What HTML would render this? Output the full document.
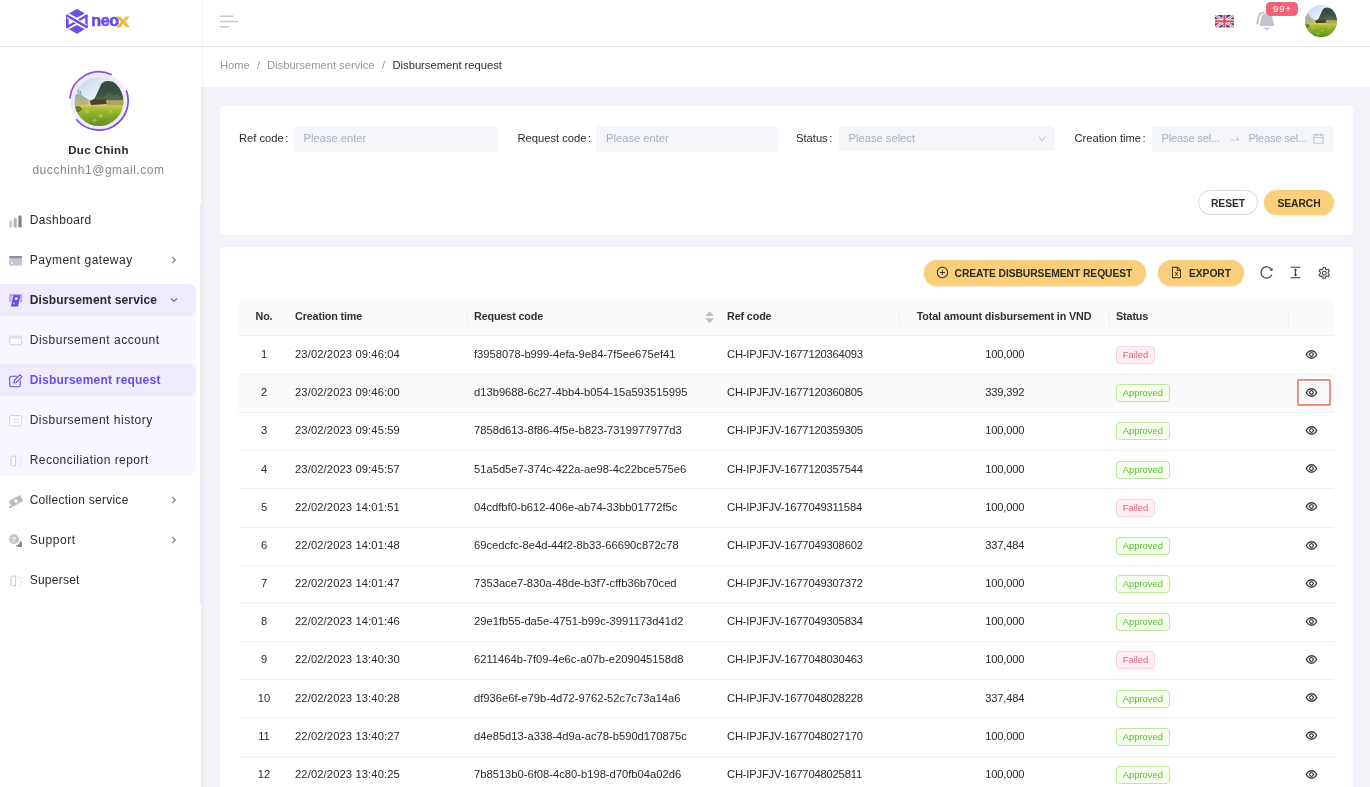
<!DOCTYPE html>
<html lang="en">
<head>
<meta charset="utf-8">
<title>Disbursement request</title>
<style>
*{box-sizing:border-box}
html,body{margin:0;padding:0}
body{width:1370px;height:787px;overflow:hidden;background:#f3f3f9;font-family:"Liberation Sans",Arial,sans-serif;font-size:11.2px;color:#2a2a2e;position:relative}
#wrap{position:absolute;left:0;top:0;width:1370px;height:787px;overflow:hidden;will-change:transform}
.abs{position:absolute}
/* sidebar */
#side{position:absolute;left:0;top:0;width:201px;height:787px;background:#fff}
#side .shadow{position:absolute;left:201px;top:0;width:4px;height:87px;background:linear-gradient(90deg,rgba(0,0,0,.04),rgba(0,0,0,0));z-index:5}
#logo{position:absolute;left:0;top:0;width:201px;height:46px}
#hdrline{position:absolute;left:0;top:46px;width:1370px;height:1px;background:#e7e7ea}
#top{position:absolute;left:201px;top:0;width:1169px;height:46px;background:#fff}
#crumb{position:absolute;left:201px;top:47px;width:1169px;height:40px;background:#fff;font-size:11.2px;color:#97979d;line-height:40px}
#crumb span{position:absolute;top:-2.5px;white-space:nowrap}
.uname{position:absolute;left:0;width:197px;text-align:center;white-space:nowrap}
.menu{position:absolute;left:0;width:196px;height:40px;font-size:12px;color:#2b2b30;white-space:nowrap}
.menu .lbl{position:absolute;left:29.7px;top:0;line-height:40px}
.menu svg.ic{position:absolute;left:8px;top:12.6px}
.menu svg.chev{position:absolute;left:169px;top:15px}
.menu.b .lbl{font-weight:700}
.card{position:absolute;background:#fff;border-radius:4px}
.flabel{position:absolute;top:126px;line-height:25px;font-size:11.2px;color:#2a2a2e;white-space:nowrap}
.finput{position:absolute;top:126px;height:26px;background:#f5f6fa;border-radius:4px;font-size:11.2px;color:#a9afc1;line-height:25px;white-space:nowrap}
.finput span{position:absolute;top:0}
.btn{position:absolute;height:26px;border-radius:13px;font-weight:700;font-size:10.3px;line-height:26px;color:#2f2a22;letter-spacing:-.06px;white-space:nowrap;text-align:center}
.btn.y{background:#f9cf7c;box-shadow:0 1px 2px rgba(200,160,60,.25)}
.btn.w{background:#fff;border:1px solid #d9d9d9;line-height:24px}
/* table */
#tbl{position:absolute;left:239px;top:299px;width:1095px}
.th-row{height:37px;margin-bottom:.72px;background:#fafafa;border-bottom:1px solid #f0f0f0;border-radius:6px 6px 0 0;position:relative;font-weight:700;font-size:10.8px;color:#303034;letter-spacing:-.14px}
.th{position:absolute;top:0;height:36px;line-height:34.4px;white-space:nowrap}
.th .sep{position:absolute;right:-1px;top:9.5px;width:1px;height:17.5px;background:#efefef}
.tr{position:relative;height:38.18px;border-bottom:1px solid #f0f0f0}
.tr.hl{background:#fafafa}
.td{position:absolute;top:.4px;height:37px;line-height:35.2px;white-space:nowrap}
.c-no{left:0;width:50px;text-align:center}
.c-time{left:56px;letter-spacing:.12px}
.c-req{left:235px}
.c-ref{left:488px;letter-spacing:-.18px}
.c-amt{left:660.8px;width:210px;text-align:center;letter-spacing:-.2px}
.c-st{left:877px}
.c-act{left:1049px;width:46px;text-align:center}
.tag{position:absolute;left:0;top:8.9px;display:block;height:18px;line-height:16.6px;padding:0 5.7px;border:1px solid;border-radius:4px;font-size:9.4px;letter-spacing:.02px}
.tag-f{background:#ffeff1;border-color:#f9d3d8;color:#e0647c}
.tag-a{background:#f6ffed;border-color:#bce5a0;color:#5cba38}
.eye{position:absolute;left:17px;top:10.6px;line-height:0}
.eye svg{stroke:#1f1f22;stroke-width:26;fill:#1f1f22}
.eye.boxed{outline:none}
.redbox{position:absolute;left:8px;top:3px;width:36px;height:29px}
</style>
</head>
<body>
<div id="wrap">
<svg width="0" height="0" style="position:absolute">
<defs>
<linearGradient id="p-sky" x1="0" y1="0" x2=".8" y2="1"><stop offset="0" stop-color="#bcd2ec"/><stop offset=".45" stop-color="#e9eff6"/><stop offset="1" stop-color="#f6f4ea"/></linearGradient>
<linearGradient id="p-mt" x1="0" y1="0" x2="0" y2="1"><stop offset="0" stop-color="#33473f"/><stop offset=".6" stop-color="#3f5546"/><stop offset="1" stop-color="#6a7848"/></linearGradient>
<linearGradient id="p-fd" x1="0" y1="0" x2="0" y2="1"><stop offset="0" stop-color="#c3cd4a"/><stop offset=".3" stop-color="#97b52c"/><stop offset="1" stop-color="#5d8e20"/></linearGradient>
<g id="photo">
<rect width="100" height="100" fill="url(#p-sky)"/>
<path d="M0 40L6 33L14 36L22 42L30 47L40 50L0 52z" fill="#9fb0a4"/>
<path d="M6 30l2-6 2 8 3-5 1 9z" fill="#6f7f78" opacity=".7"/>
<path d="M37 50L43 40L49 27L55 14L61 9L68 8L76 9L85 13L92 22L97 32L100 42V58H37z" fill="url(#p-mt)"/>
<path d="M60 40L68 30L78 36L88 34L96 44L100 50V56H56z" fill="#5f6f4c" opacity=".55"/>
<rect x="0" y="48" width="100" height="13" fill="#d6c888"/>
<path d="M0 50L12 47L26 49L30 56L0 58z" fill="#b9b27a"/>
<path d="M31 49L40 45L52 46L64 45L66 55L34 57z" fill="#4d3f2c"/>
<path d="M66 50L80 48L100 50V58H66z" fill="#a9a467"/>
<rect x="0" y="58" width="100" height="42" fill="url(#p-fd)"/>
<path d="M0 60L10 59L16 66L8 72L0 70z" fill="#5c7f2a"/>
<path d="M20 70l6-3 5 4-4 5zM48 78l7-3 4 5-6 4zM70 68l6-2 3 5-6 3zM35 88l8-3 3 5-7 3z" fill="#c6d65a" opacity=".55"/>
</g>
<path id="i-eye" d="M942.2 486.2C847.4 286.5 704.1 186 512 186c-192.2 0-335.4 100.5-430.2 300.3a60.3 60.3 0 000 51.500C176.6 737.5 319.9 838 512 838c192.2 0 335.4-100.5 430.2-300.3 7.7-16.2 7.7-35 0-51.500zM512 766c-161.3 0-279.4-81.8-362.7-254C232.6 339.8 350.7 258 512 258c161.3 0 279.4 81.8 362.7 254C791.5 684.2 673.4 766 512 766zm-4-430c-97.2 0-176 78.8-176 176s78.8 176 176 176 176-78.8 176-176-78.8-176-176-176zm0 288c-61.900 0-112-50.100-112-112s50.100-112 112-112 112 50.100 112 112-50.100 112-112 112z"/>
<path id="i-reload" d="M909.1 209.3l-56.400 44.100C775.8 155.1 656.2 92 521.9 92 290 92 102.3 279.5 102 511.5 101.7 743.7 289.8 932 521.9 932c181.3 0 335.8-115 394.6-276.1 1.500-4.200-.700-8.900-4.900-10.300l-56.700-19.500a8 8 0 00-10.100 4.800c-1.800 5-3.800 10-5.900 14.900-17.300 41-42.100 77.800-73.700 109.400A344.770 344.770 0 01655.9 829c-42.300 17.900-87.400 27-133.800 27-46.500 0-91.500-9.100-133.800-27A341.500 341.500 0 01279 755.2a342.160 342.160 0 01-73.700-109.400c-17.900-42.400-27-87.400-27-133.900s9.100-91.500 27-133.900c17.300-41 42.100-77.800 73.700-109.400 31.600-31.600 68.400-56.400 109.300-73.800 42.300-17.900 87.400-27 133.800-27 46.500 0 91.500 9.100 133.800 27a341.500 341.500 0 01109.300 73.800c9.900 9.900 19.200 20.400 27.800 31.400l-60.200 47a8 8 0 003 14.100l175.600 43c5 1.200 9.900-2.600 9.900-7.700l.800-180.900c-.100-6.600-7.800-10.300-13-6.200z"/>
<path id="i-colh" d="M840 836H184c-4.400 0-8 3.600-8 8v60c0 4.400 3.600 8 8 8h656c4.400 0 8-3.600 8-8v-60c0-4.400-3.600-8-8-8zm0-724H184c-4.400 0-8 3.600-8 8v60c0 4.400 3.600 8 8 8h656c4.400 0 8-3.600 8-8v-60c0-4.400-3.600-8-8-8zM610.800 378c6 0 9.400-7 5.700-11.700L515.700 238.700a7.140 7.140 0 00-11.300 0L403.600 366.300a7.230 7.230 0 005.700 11.700H476v268h-62.800c-6 0-9.400 7-5.700 11.700l100.800 127.500c2.900 3.700 8.500 3.700 11.300 0l100.800-127.500c3.700-4.700.400-11.700-5.700-11.700H548V378h62.800z"/>
<g id="i-plus"><path d="M696 480H544V328c0-4.400-3.600-8-8-8h-48c-4.400 0-8 3.600-8 8v152H328c-4.400 0-8 3.600-8 8v48c0 4.400 3.600 8 8 8h152v152c0 4.400 3.600 8 8 8h48c4.400 0 8-3.600 8-8V544h152c4.400 0 8-3.600 8-8v-48c0-4.400-3.600-8-8-8z"/><path d="M512 64C264.600 64 64 264.600 64 512s200.600 448 448 448 448-200.600 448-448S759.400 64 512 64zm0 820c-205.400 0-372-166.600-372-372s166.600-372 372-372 372 166.600 372 372-166.600 372-372 372z"/></g>
<path id="i-xls" d="M854.600 288.600L639.400 73.400c-6-6-14.100-9.400-22.600-9.400H192c-17.700 0-32 14.300-32 32v832c0 17.700 14.300 32 32 32h640c17.700 0 32-14.300 32-32V311.300c0-8.500-3.400-16.700-9.400-22.700zM790.200 326H602V137.800L790.200 326zm1.800 562H232V136h302v216a42 42 0 0042 42h216v494zM514.100 580.100l-61.800-102.400c-2.200-3.600-6.100-5.800-10.300-5.800h-38.400c-2.300 0-4.500.600-6.400 1.900-5.600 3.500-7.300 10.900-3.700 16.600l82.300 130.400-83.400 132.800a12.040 12.040 0 0010.200 18.400h34.500c4.200 0 8-2.200 10.200-5.700L510 664.800l62.100 101.400c2.200 3.600 6.100 5.700 10.200 5.700H620c2.300 0 4.500-.700 6.500-1.900 5.600-3.600 7.200-11 3.600-16.600l-84-130.400 85.300-132.500a12.040 12.040 0 00-10.100-18.500h-35.700c-4.200 0-8.100 2.200-10.300 5.800l-61.200 102.300z"/>
<path id="i-down" d="M884 256h-75c-5.100 0-9.900 2.500-12.900 6.600L512 654.200 227.900 262.600c-3-4.100-7.800-6.600-12.900-6.600h-75c-6.500 0-10.300 7.400-6.500 12.700l352.600 486.100c12.800 17.600 39 17.600 51.700 0l352.600-486.100c3.900-5.300.100-12.700-6.400-12.700z"/>
<path id="i-swap" d="M873.100 596.200l-164-208A32 32 0 00684 376h-64.800c-6.700 0-10.400 7.700-6.300 13l144.300 183H152c-4.400 0-8 3.600-8 8v60c0 4.400 3.600 8 8 8h695.900c26.800 0 41.700-30.800 25.200-51.800z"/>
<path id="i-cal" d="M880 184H712v-64c0-4.400-3.600-8-8-8h-56c-4.400 0-8 3.600-8 8v64H384v-64c0-4.400-3.600-8-8-8h-56c-4.400 0-8 3.600-8 8v64H144c-17.700 0-32 14.300-32 32v664c0 17.700 14.300 32 32 32h736c17.700 0 32-14.300 32-32V216c0-17.700-14.300-32-32-32zm-40 656H184V460h656v380zM184 392V256h128v48c0 4.400 3.600 8 8 8h56c4.400 0 8-3.600 8-8v-48h256v48c0 4.400 3.600 8 8 8h56c4.400 0 8-3.600 8-8v-48h128v136H184z"/>
<path id="i-cup" d="M858.900 689L530.500 308.200c-9.400-10.900-27.500-10.900-37 0L165.100 689c-12.200 14.200-1.200 35 18.500 35h656.800c19.700 0 30.700-20.800 18.500-35z"/>
<path id="i-cdn" d="M840.400 300H183.600c-19.700 0-30.700 20.800-18.500 35l328.400 380.800c9.400 10.900 27.500 10.900 37 0L858.900 335c12.200-14.200 1.200-35-18.500-35z"/>
</defs>
</svg>
<!-- ============ SIDEBAR ============ -->
<div id="side">
  <div id="logo">
    <svg class="abs" style="left:60px;top:4px" width="35" height="35" viewBox="0 0 787 787">
      <defs><clipPath id="hx"><polygon points="380,104 627,247 627,533 380,676 133,533 133,247"/></clipPath></defs>
      <g clip-path="url(#hx)" fill="#6f4fe6">
        <polygon points="380,108 562,210 380,308 198,210"/>
        <polygon points="380,472 562,570 380,672 198,570"/>
        <rect x="133" y="240" width="62" height="300"/>
        <rect x="567" y="240" width="60" height="300"/>
        <path d="M133 533L627 247" stroke="#6f4fe6" stroke-width="56" fill="none"/>
        <path d="M175 271L585 509" stroke="#fff" stroke-width="100" fill="none"/>
        <path d="M133 247L627 533" stroke="#6f4fe6" stroke-width="56" fill="none"/>
      </g>
    </svg>
    <span class="abs" style="left:91.2px;top:8.2px;font-size:16.2px;font-weight:700;letter-spacing:-.4px;line-height:24px;color:#6a4ce2;-webkit-text-stroke:.55px #6a4ce2">neo</span>
    <span class="abs" style="left:117.4px;top:9.8px;font-size:14.6px;font-weight:700;line-height:24px;color:#ecba42;background:linear-gradient(90deg,#e5a838,#f2d257);-webkit-background-clip:text;background-clip:text;-webkit-text-fill-color:transparent;-webkit-text-stroke:.5px #ecbc45;transform:scaleX(1.27);transform-origin:0 0">X</span>
  </div>
  <div class="shadow"></div>
  <div class="abs" style="left:201px;top:87px;width:5px;height:700px;background:linear-gradient(90deg,#ebebf0,#f3f3f9)"></div>
  <!-- avatar -->
  <svg class="abs" style="left:66px;top:68px" width="66" height="66" viewBox="0 0 66 66">
    <defs><clipPath id="avc"><circle cx="33" cy="33.500" r="24.500"/></clipPath>
    </defs>
    <circle cx="33" cy="33" r="28.600" fill="#f0eafd"/>
    <g clip-path="url(#avc)"><use href="#photo" transform="translate(8.5 9) scale(.49)"/></g>
    <path d="M45.100 6.400A29.300 29.300 0 0 0 3.900 30" fill="none" stroke="#8655d6" stroke-width="1.700" stroke-linecap="round"/>
    <path d="M60.500 23A29.300 29.300 0 0 1 10.600 51.800" fill="none" stroke="#7a4fd6" stroke-width="1.700" stroke-linecap="round"/>
  </svg>
  <div class="uname" style="top:141px;font-size:11.5px;font-weight:700;line-height:18px;color:#2a2a2e;letter-spacing:.34px">Duc Chinh</div>
  <div class="uname" style="top:161px;font-size:12px;line-height:18px;color:#86868e;letter-spacing:.56px">ducchinh1@gmail.com</div>

  <!-- submenu background -->
  <div class="abs" style="left:0;top:284px;width:196px;height:191.5px;background:#f8f6fe;border-radius:0 8px 8px 0"></div>
  <div class="abs" style="left:0;top:284px;width:196px;height:32px;background:#efebfc;border-radius:0 8px 8px 0"></div>
  <div class="abs" style="left:0;top:363.7px;width:196px;height:32px;background:#efebfc;border-radius:0 8px 8px 0"></div>

  <div class="menu" style="top:200px">
    <svg class="ic" width="16" height="16" viewBox="0 0 16 16"><rect x="1.200" y="7.500" width="3" height="7" rx="1.200" fill="#c9cad3"/><rect x="5.800" y="5" width="3" height="9.500" rx="1.200" fill="#aeb0bb"/><rect x="10.400" y="2.500" width="3.200" height="12" rx="1.300" fill="#7e808d"/></svg>
    <span class="lbl" style="letter-spacing:0.36px">Dashboard</span></div>
  <div class="menu" style="top:240px">
    <svg class="ic" width="16" height="16" viewBox="0 0 16 16"><rect x="1.200" y="4.800" width="13" height="7.900" rx="1.500" fill="#c6c7d0"/><rect x="1.200" y="2.900" width="13" height="2.300" rx="1" fill="#8e909c"/><rect x="3" y="9.300" width="2.200" height="1.400" fill="#fff"/></svg>
    <span class="lbl" style="letter-spacing:0.51px">Payment gateway</span>
    <svg class="chev" width="10" height="10" viewBox="0 0 10 10"><path d="M3.6 2.400L6.300 5L3.600 7.600" fill="none" stroke="#7c7c88" stroke-width="1.200" stroke-linecap="round" stroke-linejoin="round"/></svg></div>
  <div class="menu b" style="top:280px">
    <svg class="ic" style="top:11.600px" width="16" height="16" viewBox="0 0 16 16"><path d="M1.200 2h13v8h-2.400V4H3.600v6H1.200z" fill="#b9a7f4"/><path d="M5.300 3.300h7l-2.200 11.200H3z" fill="#6a4be0"/><path d="M7.200 5.500h2.600l-.5 2.300H6.700z" fill="#fff"/><circle cx="6" cy="11.500" r=".9" fill="#cdbffa"/></svg>
    <span class="lbl" style="letter-spacing:0.13px">Disbursement service</span>
    <svg class="chev" width="10" height="10" viewBox="0 0 10 10"><path d="M2.300 3.700L5 6.300L7.700 3.700" fill="none" stroke="#7c7c88" stroke-width="1.200" stroke-linecap="round" stroke-linejoin="round"/></svg></div>
  <div class="menu" style="top:320px">
    <svg class="ic" width="16" height="16" viewBox="0 0 16 16"><rect x="1.700" y="3.200" width="12" height="8.600" rx="1.500" fill="#fff" stroke="#cfd0d8" stroke-width="1"/><path d="M1.700 4.900h12" stroke="#cfd0d8" stroke-width="1"/></svg>
    <span class="lbl" style="letter-spacing:0.53px">Disbursement account</span></div>
  <div class="menu b" style="top:360px;color:#6a4fdb">
    <svg class="ic" width="16" height="16" viewBox="0 0 16 16"><path d="M8.500 3.200H3.500a1.800 1.800 0 0 0-1.800 1.800v7a1.800 1.800 0 0 0 1.800 1.800h7a1.800 1.800 0 0 0 1.800-1.800V7.700" fill="none" stroke="#6a4fdb" stroke-width="1.100" stroke-linecap="round"/><path d="M11.900 1.900l2 2-5.600 5.600-2.500.500.500-2.500z" fill="#efebfc" stroke="#6a4fdb" stroke-width="1.100" stroke-linejoin="round"/></svg>
    <span class="lbl" style="letter-spacing:0.21px">Disbursement request</span></div>
  <div class="menu" style="top:400px">
    <svg class="ic" width="16" height="16" viewBox="0 0 16 16"><rect x="1.700" y="2.600" width="12" height="10.200" rx="1.500" fill="#fff" stroke="#cfd0d8" stroke-width="1"/><path d="M4.500 6.300h6.500M4.500 9.300h6.500" stroke="#dcdde3" stroke-width="1"/></svg>
    <span class="lbl" style="letter-spacing:0.52px">Disbursement history</span></div>
  <div class="menu" style="top:440px">
    <svg class="ic" width="16" height="16" viewBox="0 0 16 16"><path d="M7.600 3.100H4.300a1.200 1.200 0 0 0-1.200 1.200v7.200a1.200 1.200 0 0 0 1.200 1.200h3.300z" fill="#fff" stroke="#c9cad3" stroke-width="1"/><path d="M9.600 3.100h2.200a1.200 1.200 0 0 1 1.200 1.200v7.200a1.200 1.200 0 0 1-1.200 1.200H9.600" fill="none" stroke="#d5d6dd" stroke-width="1" stroke-dasharray="2.200 1.600"/></svg>
    <span class="lbl" style="letter-spacing:0.46px">Reconciliation report</span></div>
  <div class="menu" style="top:480px">
    <svg class="ic" width="16" height="16" viewBox="0 0 16 16"><g transform="rotate(-28 8 8)"><rect x="1.500" y="4.600" width="13" height="7" rx="1" fill="#b9bbc6"/><circle cx="8" cy="8.100" r="1.700" fill="#fff"/></g><path d="M1 12.500l3.500 2-3 .5z" fill="#9a9ca8"/></svg>
    <span class="lbl" style="letter-spacing:0.27px">Collection service</span>
    <svg class="chev" width="10" height="10" viewBox="0 0 10 10"><path d="M3.6 2.400L6.300 5L3.600 7.600" fill="none" stroke="#7c7c88" stroke-width="1.200" stroke-linecap="round" stroke-linejoin="round"/></svg></div>
  <div class="menu" style="top:520px">
    <svg class="ic" width="16" height="16" viewBox="0 0 16 16"><circle cx="6" cy="6.300" r="5" fill="#c4c5cf"/><path d="M7.500 12.600A6.500 6.500 0 0 0 12.600 7.500 3.500 3.500 0 0 1 14 10.300V13.900H9.500z" fill="#85879a"/><text x="6" y="8.800" font-size="7" font-weight="700" text-anchor="middle" fill="#fff" font-family="Liberation Sans,sans-serif">?</text></svg>
    <span class="lbl" style="letter-spacing:0.58px">Support</span>
    <svg class="chev" width="10" height="10" viewBox="0 0 10 10"><path d="M3.6 2.400L6.300 5L3.600 7.600" fill="none" stroke="#7c7c88" stroke-width="1.200" stroke-linecap="round" stroke-linejoin="round"/></svg></div>
  <div class="menu" style="top:560px">
    <svg class="ic" width="16" height="16" viewBox="0 0 16 16"><path d="M7.600 3.100H4.300a1.200 1.200 0 0 0-1.200 1.200v7.200a1.200 1.200 0 0 0 1.200 1.200h3.300z" fill="#fff" stroke="#c9cad3" stroke-width="1"/><path d="M9.600 3.100h2.200a1.200 1.200 0 0 1 1.200 1.200v7.200a1.200 1.200 0 0 1-1.200 1.200H9.600" fill="none" stroke="#d5d6dd" stroke-width="1" stroke-dasharray="2.200 1.600"/></svg>
    <span class="lbl" style="letter-spacing:0.24px">Superset</span></div>
  <!-- scrollbar thumb -->
  <div class="abs" style="left:199.500px;top:204px;width:2px;height:400px;background:#ececf1"></div>
</div>

<!-- ============ TOP BAR ============ -->
<div id="top">
  <svg class="abs" style="left:18px;top:13px" width="22" height="18" viewBox="0 0 22 18"><path d="M1.700 3.200H14M1.700 8.500H18.300M1.700 13.700H9.300" stroke="#c6c7d1" stroke-width="1.600" stroke-linecap="round"/></svg>
  <!-- flag -->
  <svg class="abs" style="left:1014.1px;top:15.3px" width="18.900" height="12.600" viewBox="0 0 60 38" preserveAspectRatio="none">
    <defs><clipPath id="fc"><rect width="60" height="38" rx="5"/></clipPath></defs>
    <g clip-path="url(#fc)"><rect width="60" height="38" fill="#2f3a8c"/>
    <path d="M0 0L60 38M60 0L0 38" stroke="#fff" stroke-width="8"/>
    <path d="M0 0L60 38M60 0L0 38" stroke="#e0526a" stroke-width="3"/>
    <path d="M30 0V38M0 19H60" stroke="#fff" stroke-width="12"/>
    <path d="M30 0V38M0 19H60" stroke="#e0485e" stroke-width="7"/></g>
  </svg>
  <!-- bell -->
  <svg class="abs" style="left:1044px;top:0" width="60" height="40" viewBox="0 0 1180 787">
    <path d="M300 512Q288 512 291 492L318 350Q335 272 420 262Q520 266 541 345L573 492Q576 512 562 512Z" fill="#c2c4cc"/>
    <path d="M242 468L262 350Q280 268 362 248" fill="none" stroke="#c2c4cc" stroke-width="40" stroke-linecap="round"/>
    <path d="M372 548H488Q474 588 430 588Q386 588 372 548Z" fill="#c2c4cc"/>
  </svg>
  <div class="abs" style="left:1065px;top:2px;width:32px;height:14px;border-radius:4.500px;background:#f2637a;color:#fff;font-size:9.6px;line-height:14.6px;text-align:center;letter-spacing:.8px;text-indent:.8px">99+</div>
  <!-- avatar -->
  <svg class="abs" style="left:1104px;top:5px" width="32.200" height="32.200" viewBox="0 0 100 100"><defs><clipPath id="avc2"><circle cx="50" cy="50" r="50"/></clipPath></defs><g clip-path="url(#avc2)"><use href="#photo"/></g></svg>
</div>
<div id="hdrline"></div>
<div id="crumb"><span style="left:19px">Home</span><span style="left:56px">/</span><span style="left:66px">Disbursement service</span><span style="left:181px">/</span><span style="left:191.500px;color:#2f2f34">Disbursement request</span></div>
<!-- ============ FILTER CARD ============ -->
<div class="card" style="left:220px;top:106px;width:1133px;height:129px"></div>
<div class="flabel" style="left:239px">Ref code<span style="margin-left:1.500px">:</span></div>
<div class="finput" style="left:294px;width:204px"><span style="left:9.500px">Please enter</span></div>
<div class="flabel" style="left:517.500px">Request code<span style="margin-left:1.500px">:</span></div>
<div class="finput" style="left:596px;width:181.500px"><span style="left:10px">Please enter</span></div>
<div class="flabel" style="left:796px">Status<span style="margin-left:1.500px">:</span></div>
<div class="finput" style="left:839px;width:216px;height:25.3px"><span style="left:9.500px">Please select</span>
  <svg class="abs" style="left:197.5px;top:7.5px" width="10" height="10" viewBox="0 0 1024 1024" fill="#b3b8c6"><use href="#i-down"/></svg></div>
<div class="flabel" style="left:1074.500px">Creation time<span style="margin-left:1.500px">:</span></div>
<div class="finput" style="left:1152px;width:182px"><span style="left:9.500px;letter-spacing:-.22px">Please sel...</span>
  <svg class="abs" style="left:77px;top:7px" width="12" height="12" viewBox="0 0 1024 1024" fill="#b3b8c6"><use href="#i-swap"/></svg>
  <span style="left:96.500px;letter-spacing:-.22px">Please sel...</span>
  <svg class="abs" style="left:160px;top:6px" width="13" height="13" viewBox="0 0 1024 1024" fill="#b9bdca"><use href="#i-cal"/></svg></div>
<div class="btn w" style="left:1198px;top:190px;width:60px;height:25px;line-height:25px;color:#303034">RESET</div>
<div class="btn y" style="left:1264px;top:190px;width:70px;height:25px;line-height:27px">SEARCH</div>

<!-- ============ TABLE CARD ============ -->
<div class="card" style="left:220px;top:247px;width:1133px;height:560px"></div>
<div class="btn y" style="left:924px;top:260px;width:222px;text-align:left;line-height:27.8px"><svg class="abs" style="left:11.5px;top:6px" width="13" height="13" viewBox="0 0 1024 1024" fill="#2f2a22"><use href="#i-plus"/></svg><span class="abs" style="left:30.500px">CREATE DISBURSEMENT REQUEST</span></div>
<div class="btn y" style="left:1158px;top:260px;width:86px;text-align:left;line-height:27.8px"><svg class="abs" style="left:12px;top:5.5px" width="13" height="13" viewBox="0 0 1024 1024" fill="#2f2a22"><use href="#i-xls"/></svg><span class="abs" style="left:31px">EXPORT</span></div>
<svg class="abs" style="left:1258.5px;top:265.3px" width="15" height="15" viewBox="0 0 1024 1024" fill="#3a3a40"><use href="#i-reload"/></svg>
<svg class="abs" style="left:1288px;top:265.3px" width="15" height="15" viewBox="0 0 1024 1024" fill="#3a3a40"><use href="#i-colh"/></svg>
<svg class="abs" style="left:1317px;top:265.5px" width="14.5" height="14.5" viewBox="0 0 24 24" fill="none" stroke="#3a3a40" stroke-width="1.700" stroke-linejoin="round"><path d="M10.300 2.500h3.400l.600 2.700 1.900 1.100 2.600-.800 1.700 2.900-2 1.900v2.200l2 1.900-1.700 2.900-2.600-.800-1.900 1.100-.600 2.700h-3.400l-.600-2.700-1.900-1.100-2.600.800-1.700-2.900 2-1.900v-2.200l-2-1.900 1.700-2.900 2.600.800 1.900-1.100z"/><circle cx="12" cy="12" r="3.200"/></svg>

<div id="tbl">
<div class="th-row">
  <div class="th" style="left:0;width:50px;text-align:center">No.</div>
  <div class="th" style="left:48px;width:180px;padding-left:8px">Creation time<span class="sep"></span></div>
  <div class="th" style="left:228px;width:252px;padding-left:7px">Request code
    <svg class="abs" style="left:236.8px;top:9px" width="11.3" height="11.3" viewBox="0 0 1024 1024" fill="#bfbfc3"><use href="#i-cup"/></svg>
    <svg class="abs" style="left:236.8px;top:16.1px" width="11.3" height="11.3" viewBox="0 0 1024 1024" fill="#bfbfc3"><use href="#i-cdn"/></svg></div>
  <div class="th" style="left:480px;width:180px;padding-left:8px">Ref code<span class="sep"></span></div>
  <div class="th" style="left:660px;width:210px;text-align:center">Total amount disbursement in VND<span class="sep"></span></div>
  <div class="th" style="left:870px;width:179px;padding-left:7px">Status<span class="sep"></span></div>
  <div class="th" style="left:1049px;width:46px"></div>
</div>
<div class="tr"><div class="td c-no">1</div><div class="td c-time">23/02/2023 09:46:04</div><div class="td c-req">f3958078-b999-4efa-9e84-7f5ee675ef41</div><div class="td c-ref">CH-IPJFJV-1677120364093</div><div class="td c-amt">100,000</div><div class="td c-st"><span class="tag tag-f">Failed</span></div><div class="td c-act"><span class="eye"><svg viewBox="0 0 1024 1024" width="13" height="13"><use href="#i-eye"/></svg></span></div></div>
<div class="tr hl"><div class="td c-no">2</div><div class="td c-time">23/02/2023 09:46:00</div><div class="td c-req">d13b9688-6c27-4bb4-b054-15a593515995</div><div class="td c-ref">CH-IPJFJV-1677120360805</div><div class="td c-amt">339,392</div><div class="td c-st"><span class="tag tag-a">Approved</span></div><div class="td c-act"><svg class="redbox" viewBox="0 0 36 29"><rect x="1.95" y="1.95" width="32.1" height="25" rx="1" fill="none" stroke="#e4826f" stroke-width="1.7"/></svg><span class="eye"><svg viewBox="0 0 1024 1024" width="13" height="13"><use href="#i-eye"/></svg></span></div></div>
<div class="tr"><div class="td c-no">3</div><div class="td c-time">23/02/2023 09:45:59</div><div class="td c-req">7858d613-8f86-4f5e-b823-7319977977d3</div><div class="td c-ref">CH-IPJFJV-1677120359305</div><div class="td c-amt">100,000</div><div class="td c-st"><span class="tag tag-a">Approved</span></div><div class="td c-act"><span class="eye"><svg viewBox="0 0 1024 1024" width="13" height="13"><use href="#i-eye"/></svg></span></div></div>
<div class="tr"><div class="td c-no">4</div><div class="td c-time">23/02/2023 09:45:57</div><div class="td c-req">51a5d5e7-374c-422a-ae98-4c22bce575e6</div><div class="td c-ref">CH-IPJFJV-1677120357544</div><div class="td c-amt">100,000</div><div class="td c-st"><span class="tag tag-a">Approved</span></div><div class="td c-act"><span class="eye"><svg viewBox="0 0 1024 1024" width="13" height="13"><use href="#i-eye"/></svg></span></div></div>
<div class="tr"><div class="td c-no">5</div><div class="td c-time">22/02/2023 14:01:51</div><div class="td c-req">04cdfbf0-b612-406e-ab74-33bb01772f5c</div><div class="td c-ref">CH-IPJFJV-1677049311584</div><div class="td c-amt">100,000</div><div class="td c-st"><span class="tag tag-f">Failed</span></div><div class="td c-act"><span class="eye"><svg viewBox="0 0 1024 1024" width="13" height="13"><use href="#i-eye"/></svg></span></div></div>
<div class="tr"><div class="td c-no">6</div><div class="td c-time">22/02/2023 14:01:48</div><div class="td c-req">69cedcfc-8e4d-44f2-8b33-66690c872c78</div><div class="td c-ref">CH-IPJFJV-1677049308602</div><div class="td c-amt">337,484</div><div class="td c-st"><span class="tag tag-a">Approved</span></div><div class="td c-act"><span class="eye"><svg viewBox="0 0 1024 1024" width="13" height="13"><use href="#i-eye"/></svg></span></div></div>
<div class="tr"><div class="td c-no">7</div><div class="td c-time">22/02/2023 14:01:47</div><div class="td c-req">7353ace7-830a-48de-b3f7-cffb36b70ced</div><div class="td c-ref">CH-IPJFJV-1677049307372</div><div class="td c-amt">100,000</div><div class="td c-st"><span class="tag tag-a">Approved</span></div><div class="td c-act"><span class="eye"><svg viewBox="0 0 1024 1024" width="13" height="13"><use href="#i-eye"/></svg></span></div></div>
<div class="tr"><div class="td c-no">8</div><div class="td c-time">22/02/2023 14:01:46</div><div class="td c-req">29e1fb55-da5e-4751-b99c-3991173d41d2</div><div class="td c-ref">CH-IPJFJV-1677049305834</div><div class="td c-amt">100,000</div><div class="td c-st"><span class="tag tag-a">Approved</span></div><div class="td c-act"><span class="eye"><svg viewBox="0 0 1024 1024" width="13" height="13"><use href="#i-eye"/></svg></span></div></div>
<div class="tr"><div class="td c-no">9</div><div class="td c-time">22/02/2023 13:40:30</div><div class="td c-req">6211464b-7f09-4e6c-a07b-e209045158d8</div><div class="td c-ref">CH-IPJFJV-1677048030463</div><div class="td c-amt">100,000</div><div class="td c-st"><span class="tag tag-f">Failed</span></div><div class="td c-act"><span class="eye"><svg viewBox="0 0 1024 1024" width="13" height="13"><use href="#i-eye"/></svg></span></div></div>
<div class="tr"><div class="td c-no">10</div><div class="td c-time">22/02/2023 13:40:28</div><div class="td c-req">df936e6f-e79b-4d72-9762-52c7c73a14a6</div><div class="td c-ref">CH-IPJFJV-1677048028228</div><div class="td c-amt">337,484</div><div class="td c-st"><span class="tag tag-a">Approved</span></div><div class="td c-act"><span class="eye"><svg viewBox="0 0 1024 1024" width="13" height="13"><use href="#i-eye"/></svg></span></div></div>
<div class="tr"><div class="td c-no">11</div><div class="td c-time">22/02/2023 13:40:27</div><div class="td c-req">d4e85d13-a338-4d9a-ac78-b590d170875c</div><div class="td c-ref">CH-IPJFJV-1677048027170</div><div class="td c-amt">100,000</div><div class="td c-st"><span class="tag tag-a">Approved</span></div><div class="td c-act"><span class="eye"><svg viewBox="0 0 1024 1024" width="13" height="13"><use href="#i-eye"/></svg></span></div></div>
<div class="tr"><div class="td c-no">12</div><div class="td c-time">22/02/2023 13:40:25</div><div class="td c-req">7b8513b0-6f08-4c80-b198-d70fb04a02d6</div><div class="td c-ref">CH-IPJFJV-1677048025811</div><div class="td c-amt">100,000</div><div class="td c-st"><span class="tag tag-a">Approved</span></div><div class="td c-act"><span class="eye"><svg viewBox="0 0 1024 1024" width="13" height="13"><use href="#i-eye"/></svg></span></div></div></div>
</div>
</body>
</html>
